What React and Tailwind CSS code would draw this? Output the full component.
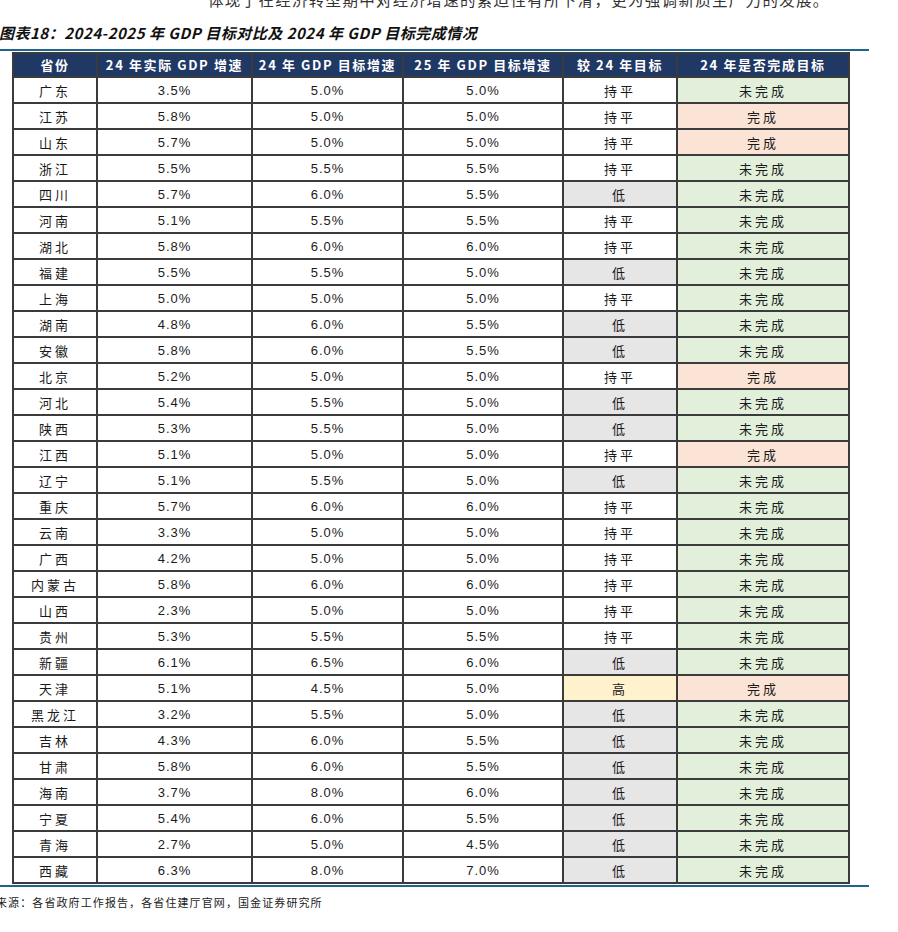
import React from "react";

const rows = [
  ["广东", "3.5%", "5.0%", "5.0%", "持平", "未完成"],
  ["江苏", "5.8%", "5.0%", "5.0%", "持平", "完成"],
  ["山东", "5.7%", "5.0%", "5.0%", "持平", "完成"],
  ["浙江", "5.5%", "5.5%", "5.5%", "持平", "未完成"],
  ["四川", "5.7%", "6.0%", "5.5%", "低", "未完成"],
  ["河南", "5.1%", "5.5%", "5.5%", "持平", "未完成"],
  ["湖北", "5.8%", "6.0%", "6.0%", "持平", "未完成"],
  ["福建", "5.5%", "5.5%", "5.0%", "低", "未完成"],
  ["上海", "5.0%", "5.0%", "5.0%", "持平", "未完成"],
  ["湖南", "4.8%", "6.0%", "5.5%", "低", "未完成"],
  ["安徽", "5.8%", "6.0%", "5.5%", "低", "未完成"],
  ["北京", "5.2%", "5.0%", "5.0%", "持平", "完成"],
  ["河北", "5.4%", "5.5%", "5.0%", "低", "未完成"],
  ["陕西", "5.3%", "5.5%", "5.0%", "低", "未完成"],
  ["江西", "5.1%", "5.0%", "5.0%", "持平", "完成"],
  ["辽宁", "5.1%", "5.5%", "5.0%", "低", "未完成"],
  ["重庆", "5.7%", "6.0%", "6.0%", "持平", "未完成"],
  ["云南", "3.3%", "5.0%", "5.0%", "持平", "未完成"],
  ["广西", "4.2%", "5.0%", "5.0%", "持平", "未完成"],
  ["内蒙古", "5.8%", "6.0%", "6.0%", "持平", "未完成"],
  ["山西", "2.3%", "5.0%", "5.0%", "持平", "未完成"],
  ["贵州", "5.3%", "5.5%", "5.5%", "持平", "未完成"],
  ["新疆", "6.1%", "6.5%", "6.0%", "低", "未完成"],
  ["天津", "5.1%", "4.5%", "5.0%", "高", "完成"],
  ["黑龙江", "3.2%", "5.5%", "5.0%", "低", "未完成"],
  ["吉林", "4.3%", "6.0%", "5.5%", "低", "未完成"],
  ["甘肃", "5.8%", "6.0%", "5.5%", "低", "未完成"],
  ["海南", "3.7%", "8.0%", "6.0%", "低", "未完成"],
  ["宁夏", "5.4%", "6.0%", "5.5%", "低", "未完成"],
  ["青海", "2.7%", "5.0%", "4.5%", "低", "未完成"],
  ["西藏", "6.3%", "8.0%", "7.0%", "低", "未完成"],
];

const headers = ["省份", "24 年实际 GDP 增速", "24 年 GDP 目标增速", "25 年 GDP 目标增速", "较 24 年目标", "24 年是否完成目标"];

const cjk = "font-['Noto_Sans_CJK_SC','Noto_Sans_CJK_JP',sans-serif]";
const num = "font-['Liberation_Sans','Noto_Sans_CJK_SC',sans-serif]";

function cmpBg(v) {
  if (v === "低") return "bg-[#e6e6e6]";
  if (v === "高") return "bg-[#fff2cc]";
  return "bg-white";
}
function doneBg(v) {
  return v === "完成" ? "bg-[#fbe3d6]" : "bg-[#e2efda]";
}

export default function App() {
  return (
    <div className="w-[898px] h-[932px] bg-white overflow-hidden flex flex-col text-[#1a1a1a]">
      <div className={`mt-[-10px] pl-[208px] text-[15.5px] leading-[18px] tracking-[1.3px] whitespace-nowrap text-[#333] ${cjk}`}>
        体现了在经济转型期中对经济增速的紧迫性有所下滑，更为强调新质生产力的发展。
      </div>
      <div className={`mt-[16px] ml-[-1px] text-[15px] leading-[18px] font-bold italic whitespace-nowrap text-[#111] tracking-[0.5px] ${cjk}`}>
        图表18：2024-2025 年 GDP 目标对比及 2024 年 GDP 目标完成情况
      </div>
      <div className="mt-[7px] h-[2px] w-[869px] bg-[#1f6391]" />
      <div className="mt-[1px] ml-[12px] w-[838px] p-[2px] bg-[#3b3b3b] grid grid-cols-[82px_153px_149px_158px_112px_170px] gap-[2px]">
        {headers.map((h, i) => (
          <div key={i} className={`h-[22px] bg-[#203864] text-white font-bold text-[13px] tracking-[1.6px] flex items-center justify-center whitespace-nowrap ${cjk}`}>
            {h}
          </div>
        ))}
        {rows.map((r, ri) => (
          <React.Fragment key={ri}>
            <div className={`h-[24px] bg-white flex items-center justify-center pt-[1px] text-[13px] tracking-[3px] ${cjk}`}>{r[0]}</div>
            <div className={`h-[24px] bg-white flex items-center justify-center pt-[1px] text-[13px] tracking-[1px] ${num}`}>{r[1]}</div>
            <div className={`h-[24px] bg-white flex items-center justify-center pt-[1px] text-[13px] tracking-[1px] ${num}`}>{r[2]}</div>
            <div className={`h-[24px] bg-white flex items-center justify-center pt-[1px] text-[13px] tracking-[1px] ${num}`}>{r[3]}</div>
            <div className={`h-[24px] ${cmpBg(r[4])} flex items-center justify-center pt-[1px] text-[13px] tracking-[3px] ${cjk}`}>{r[4]}</div>
            <div className={`h-[24px] ${doneBg(r[5])} flex items-center justify-center pt-[1px] text-[13px] tracking-[3px] ${cjk}`}>{r[5]}</div>
          </React.Fragment>
        ))}
      </div>
      <div className="mt-[1px] h-[2px] w-[869px] bg-[#1f6391]" />
      <div className={`mt-[8px] ml-[-4px] text-[11px] leading-[14px] tracking-[1.1px] whitespace-nowrap text-[#222] ${cjk}`}>
        来源：各省政府工作报告，各省住建厅官网，国金证券研究所
      </div>
    </div>
  );
}
